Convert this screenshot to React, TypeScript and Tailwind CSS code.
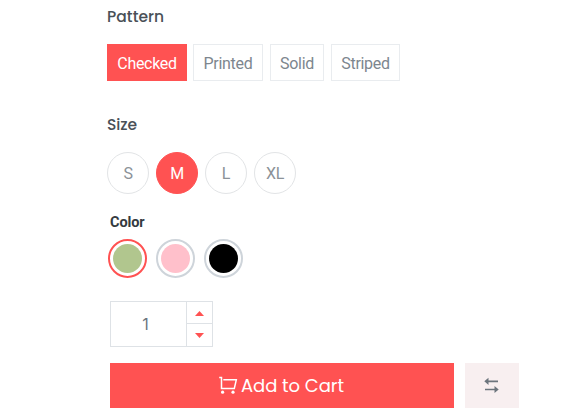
import React from 'react';

const patterns = [
  { label: 'Checked', box: 'w-[80px] mr-[6px] border-[#ff5252] bg-[#ff5252] text-white' },
  { label: 'Printed', box: 'w-[70px] mr-[7px] border-[#e9ecef] text-[#7d868e]' },
  { label: 'Solid', box: 'w-[54px] mr-[7px] border-[#e9ecef] text-[#7d868e]' },
  { label: 'Striped', box: 'w-[69px] border-[#e9ecef] text-[#7d868e]' },
];

const sizes = [
  { label: 'S', style: 'border-[#e2e4e6] text-[#8b9298]' },
  { label: 'M', style: 'border-[#ff5252] bg-[#ff5252] text-white' },
  { label: 'L', style: 'border-[#e2e4e6] text-[#8b9298]' },
  { label: 'XL', style: 'border-[#e2e4e6] text-[#8b9298]' },
];

const colors = [
  { name: 'green', ring: 'border-[#ff5252]', fill: 'bg-[#b1c68e]' },
  { name: 'pink', ring: 'border-[#ced4da]', fill: 'bg-[#ffc0cb]' },
  { name: 'black', ring: 'border-[#ced4da]', fill: 'bg-black' },
];

function CartIcon() {
  return (
    <svg width="19" height="19" viewBox="0 0 19 19" fill="none" stroke="white" strokeWidth="1.5" className="shrink-0">
      <path d="M0.2 1.5H2.5V12.5H15.3L17.3 3.8H4.3" />
      <circle cx="3.6" cy="16.2" r="1.6" fill="white" stroke="none" />
      <circle cx="14" cy="16.2" r="1.6" fill="white" stroke="none" />
    </svg>
  );
}

function CompareIcon() {
  return (
    <svg width="15" height="17" viewBox="0 0 15 17" fill="none" stroke="#6c757d" strokeWidth="1.7" className="mr-0.5">
      <path d="M4 4.3H14M1 12.5H11" />
      <path d="M0.3 4.3L4.5 0.7V7.9ZM14.7 12.5L10.5 8.9V16.1Z" fill="#6c757d" stroke="none" />
    </svg>
  );
}

export default function App() {
  return (
    <main className="flex h-[416px] w-[569px] flex-col overflow-hidden bg-white pl-[107px] font-[Roboto,sans-serif]">
      <h2 className="mt-[5px] h-6 font-[Poppins,Inter,sans-serif] text-[15.5px] leading-6 font-medium tracking-[0.05px] text-[#495057]">Pattern</h2>
      <div className="mt-[15px] flex h-[37px]">
        {patterns.map((p) => (
          <button key={p.label} className={`flex shrink-0 items-center justify-center border pt-0.5 text-[16px] tracking-[-0.3px] ${p.box}`}>{p.label}</button>
        ))}
      </div>
      <h2 className="mt-8 h-6 font-[Poppins,Inter,sans-serif] text-[15.5px] leading-6 font-medium tracking-[-0.1px] text-[#495057]">Size</h2>
      <div className="mt-[15px] flex h-[42px] gap-[7px]">
        {sizes.map((s) => (
          <button key={s.label} className={`flex size-[42px] items-center justify-center rounded-full border pt-0.5 text-[16px] tracking-[-0.3px] ${s.style}`}>{s.label}</button>
        ))}
      </div>
      <h2 className="mt-[19px] ml-[3px] h-5 text-[14.5px] leading-5 font-bold tracking-[-0.1px] text-[#343a40]">Color</h2>
      <div className="mt-[6px] ml-px flex h-[39px] gap-[9px]">
        {colors.map((c) => (
          <button key={c.name} aria-label={c.name} className={`flex size-[39px] items-center justify-center rounded-full border-2 ${c.ring}`}>
            <span className={`size-[29px] rounded-full ${c.fill}`} />
          </button>
        ))}
      </div>
      <div className="mt-[23px] ml-[3px] flex h-[46px] w-[103px] border border-[#dee2e6] text-[#6c757d]">
        <div className="flex w-[75px] items-center justify-center pr-[6px] font-[Inter,sans-serif] text-[16px]">1</div>
        <div className="flex flex-1 flex-col border-l border-[#dee2e6]">
          <button aria-label="Increase" className="flex h-[22px] items-center justify-center border-b border-[#dee2e6] pt-0.5">
            <svg width="9" height="5" viewBox="0 0 9 5"><path d="M0 5L4.5 0L9 5Z" fill="#ff5252" /></svg>
          </button>
          <button aria-label="Decrease" className="flex flex-1 items-center justify-center pt-px">
            <svg width="9" height="5" viewBox="0 0 9 5"><path d="M0 0L4.5 5L9 0Z" fill="#ff5252" /></svg>
          </button>
        </div>
      </div>
      <div className="mt-4 ml-[3px] flex h-[45px] gap-[11px]">
        <button className="flex w-[344px] items-center justify-center gap-[3px] bg-[#ff5252] pr-px font-[Poppins,Inter,sans-serif] text-[18px] tracking-[-0.05px] text-white">
          <CartIcon />
          <span>Add to Cart</span>
        </button>
        <button aria-label="Compare" className="flex w-[54px] items-center justify-center bg-[#f8eff0]">
          <CompareIcon />
        </button>
      </div>
    </main>
  );
}
